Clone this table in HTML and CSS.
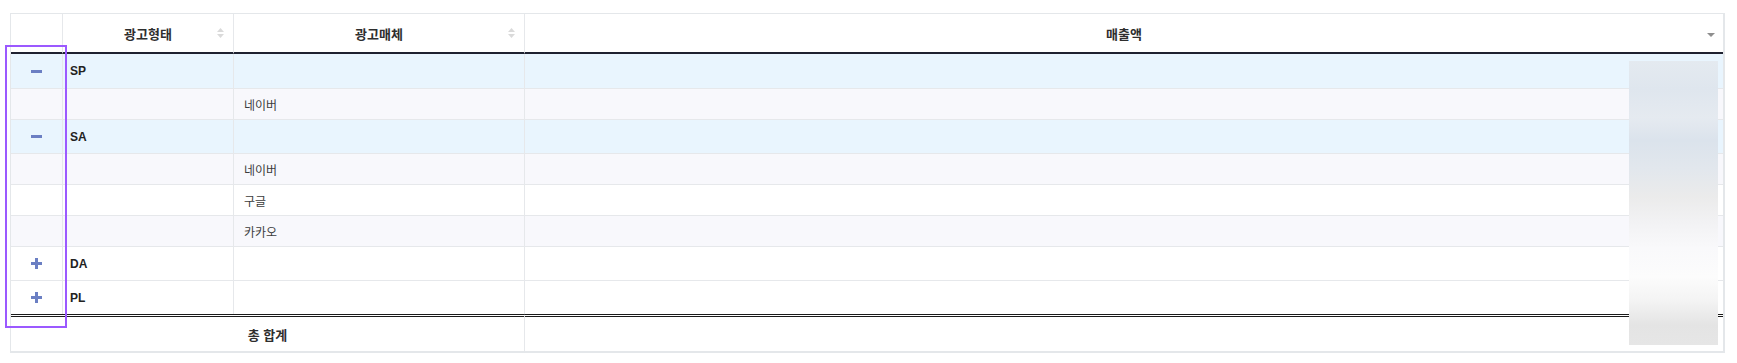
FILE: index.html
```html
<!DOCTYPE html>
<html lang="ko">
<head>
<meta charset="utf-8">
<title>광고 매출 현황</title>
<link rel="stylesheet" href="styles.css">
</head>
<body>
<div class="page">
  <table class="grid">
    <colgroup>
      <col class="c-toggle">
      <col class="c-type">
      <col class="c-media">
      <col class="c-sales">
    </colgroup>
    <thead>
      <tr>
        <th></th>
        <th>
          <div class="th-inner"><span class="th-label">광고형태</span>
            <svg class="sort" width="7" height="10" viewBox="0 0 7 10"><polygon points="0,4 3.5,0 7,4"/><polygon points="0,6 3.5,10 7,6"/></svg>
          </div>
        </th>
        <th>
          <div class="th-inner"><span class="th-label">광고매체</span>
            <svg class="sort" width="7" height="10" viewBox="0 0 7 10"><polygon points="0,4 3.5,0 7,4"/><polygon points="0,6 3.5,10 7,6"/></svg>
          </div>
        </th>
        <th class="last">
          <div class="th-inner"><span class="th-label">매출액</span>
            <svg class="sort-desc" width="8" height="4" viewBox="0 0 8 4"><polygon points="0,0 8,0 4,4"/></svg>
          </div>
        </th>
      </tr>
    </thead>
    <tbody>
      <tr class="group open first">
        <td class="toggle"><svg width="11" height="11" viewBox="0 0 11 11"><rect x="0" y="4" width="11" height="3"/></svg></td>
        <td class="type">SP</td>
        <td class="media"></td>
        <td class="sales"></td>
      </tr>
      <tr class="child alt">
        <td class="toggle"></td>
        <td class="type"></td>
        <td class="media">네이버</td>
        <td class="sales"></td>
      </tr>
      <tr class="group open">
        <td class="toggle"><svg width="11" height="11" viewBox="0 0 11 11"><rect x="0" y="4" width="11" height="3"/></svg></td>
        <td class="type">SA</td>
        <td class="media"></td>
        <td class="sales"></td>
      </tr>
      <tr class="child alt">
        <td class="toggle"></td>
        <td class="type"></td>
        <td class="media">네이버</td>
        <td class="sales"></td>
      </tr>
      <tr class="child">
        <td class="toggle"></td>
        <td class="type"></td>
        <td class="media">구글</td>
        <td class="sales"></td>
      </tr>
      <tr class="child alt">
        <td class="toggle"></td>
        <td class="type"></td>
        <td class="media">카카오</td>
        <td class="sales"></td>
      </tr>
      <tr class="group">
        <td class="toggle"><svg width="11" height="11" viewBox="0 0 11 11"><rect x="0" y="4" width="11" height="3"/><rect x="4" y="0" width="3" height="11"/></svg></td>
        <td class="type">DA</td>
        <td class="media"></td>
        <td class="sales"></td>
      </tr>
      <tr class="group last">
        <td class="toggle"><svg width="11" height="11" viewBox="0 0 11 11"><rect x="0" y="4" width="11" height="3"/><rect x="4" y="0" width="3" height="11"/></svg></td>
        <td class="type">PL</td>
        <td class="media"></td>
        <td class="sales"></td>
      </tr>
    </tbody>
    <tfoot>
      <tr class="total">
        <td colspan="3" class="total-label">총 합계</td>
        <td class="sales"></td>
      </tr>
    </tfoot>
  </table>

  <div class="highlight"></div>
  <div class="mask"></div>
</div>
</body>
</html>
```

FILE: styles.css
```css
* {
  box-sizing: border-box;
}

html,
body {
  margin: 0;
  background: #ffffff;
}

body {
  font-family: "Liberation Sans", "Noto Sans CJK KR", sans-serif;
  color: #333333;
}

.page {
  position: relative;
  width: 1737px;
  height: 363px;
  padding: 13px 0 0 10px;
}

.grid {
  width: 1715px;
  table-layout: fixed;
  border-collapse: separate;
  border-spacing: 0;
  border-top: 1px solid #e4e7ea;
  border-left: 1px solid #e4e7ea;
  border-right: 2px solid #e4e7ea;
  border-bottom: 2px solid #e4e7ea;
}

.c-toggle { width: 52px; }
.c-type { width: 171px; }
.c-media { width: 291px; }

/* header */
thead tr {
  height: 40px;
}

th {
  padding: 3px 0 0 0;
  font-size: 13px;
  font-weight: 700;
  color: #2e2e2e;
  background: #ffffff;
  border-right: 1px solid #e6e8eb;
  border-bottom: 2px solid #1e2130;
  vertical-align: middle;
}

th.last {
  border-right: none;
}

.th-inner {
  display: grid;
  grid-template-columns: 1fr auto 1fr;
  align-items: center;
}

.th-label {
  grid-column: 2;
  line-height: 16px;
}

.sort {
  grid-column: 3;
  justify-self: end;
  margin-right: 9px;
  margin-top: -3px;
  fill: #dadada;
}

.sort-desc {
  grid-column: 3;
  justify-self: end;
  margin-right: 8px;
  margin-top: 1px;
  fill: #8e8e8e;
}

/* body */
td {
  padding: 0;
  font-size: 12px;
  color: #3c3c3c;
  border-right: 1px solid #e6e8eb;
  border-bottom: 1px solid #e6e8eb;
  vertical-align: middle;
}

td.sales {
  border-right: none;
}

tr.group { height: 34px; }
tr.group.first { height: 35px; }
tr.child { height: 31px; }
tr.group.last { height: 33px; }
tr.group.last td { border-bottom: none; }

tr.group.open td { background: #e9f5fe; }
tr.child td { background: #ffffff; }
tr.child.alt td { background: #f8f8fc; }
tr.group:not(.open) td { background: #ffffff; }

.toggle svg {
  display: block;
  margin: 0 auto;
  fill: #6b7fc3;
}

.type {
  padding-left: 7px;
  font-size: 12px;
  font-weight: 700;
  color: #222222;
}

.media {
  padding-left: 10px;
}

/* total */
tr.total {
  height: 37px;
}

tr.total td {
  border-top: 3px double #1a1a1a;
  border-bottom: none;
  background: #ffffff;
}

.total-label {
  text-align: center;
  font-size: 13px;
  font-weight: 700;
  color: #2e2e2e;
}

/* overlays */
.highlight {
  position: absolute;
  left: 5px;
  top: 45px;
  width: 62px;
  height: 283px;
  border: 2px solid #9b59ff;
}

.mask {
  position: absolute;
  left: 1629px;
  top: 61px;
  width: 89px;
  height: 284px;
  background: linear-gradient(to bottom,
    #e4eaf0 0%,
    #dfe6ee 10%,
    #e5eaf0 20%,
    #dbe3ec 28%,
    #e2e7ed 38%,
    #ebebeb 48%,
    #f2f2f4 57%,
    #f9f9fb 66%,
    #fcfcfc 76%,
    #f4f4f4 84%,
    #e4e4e4 93%,
    #e6e6e6 100%);
}
```
